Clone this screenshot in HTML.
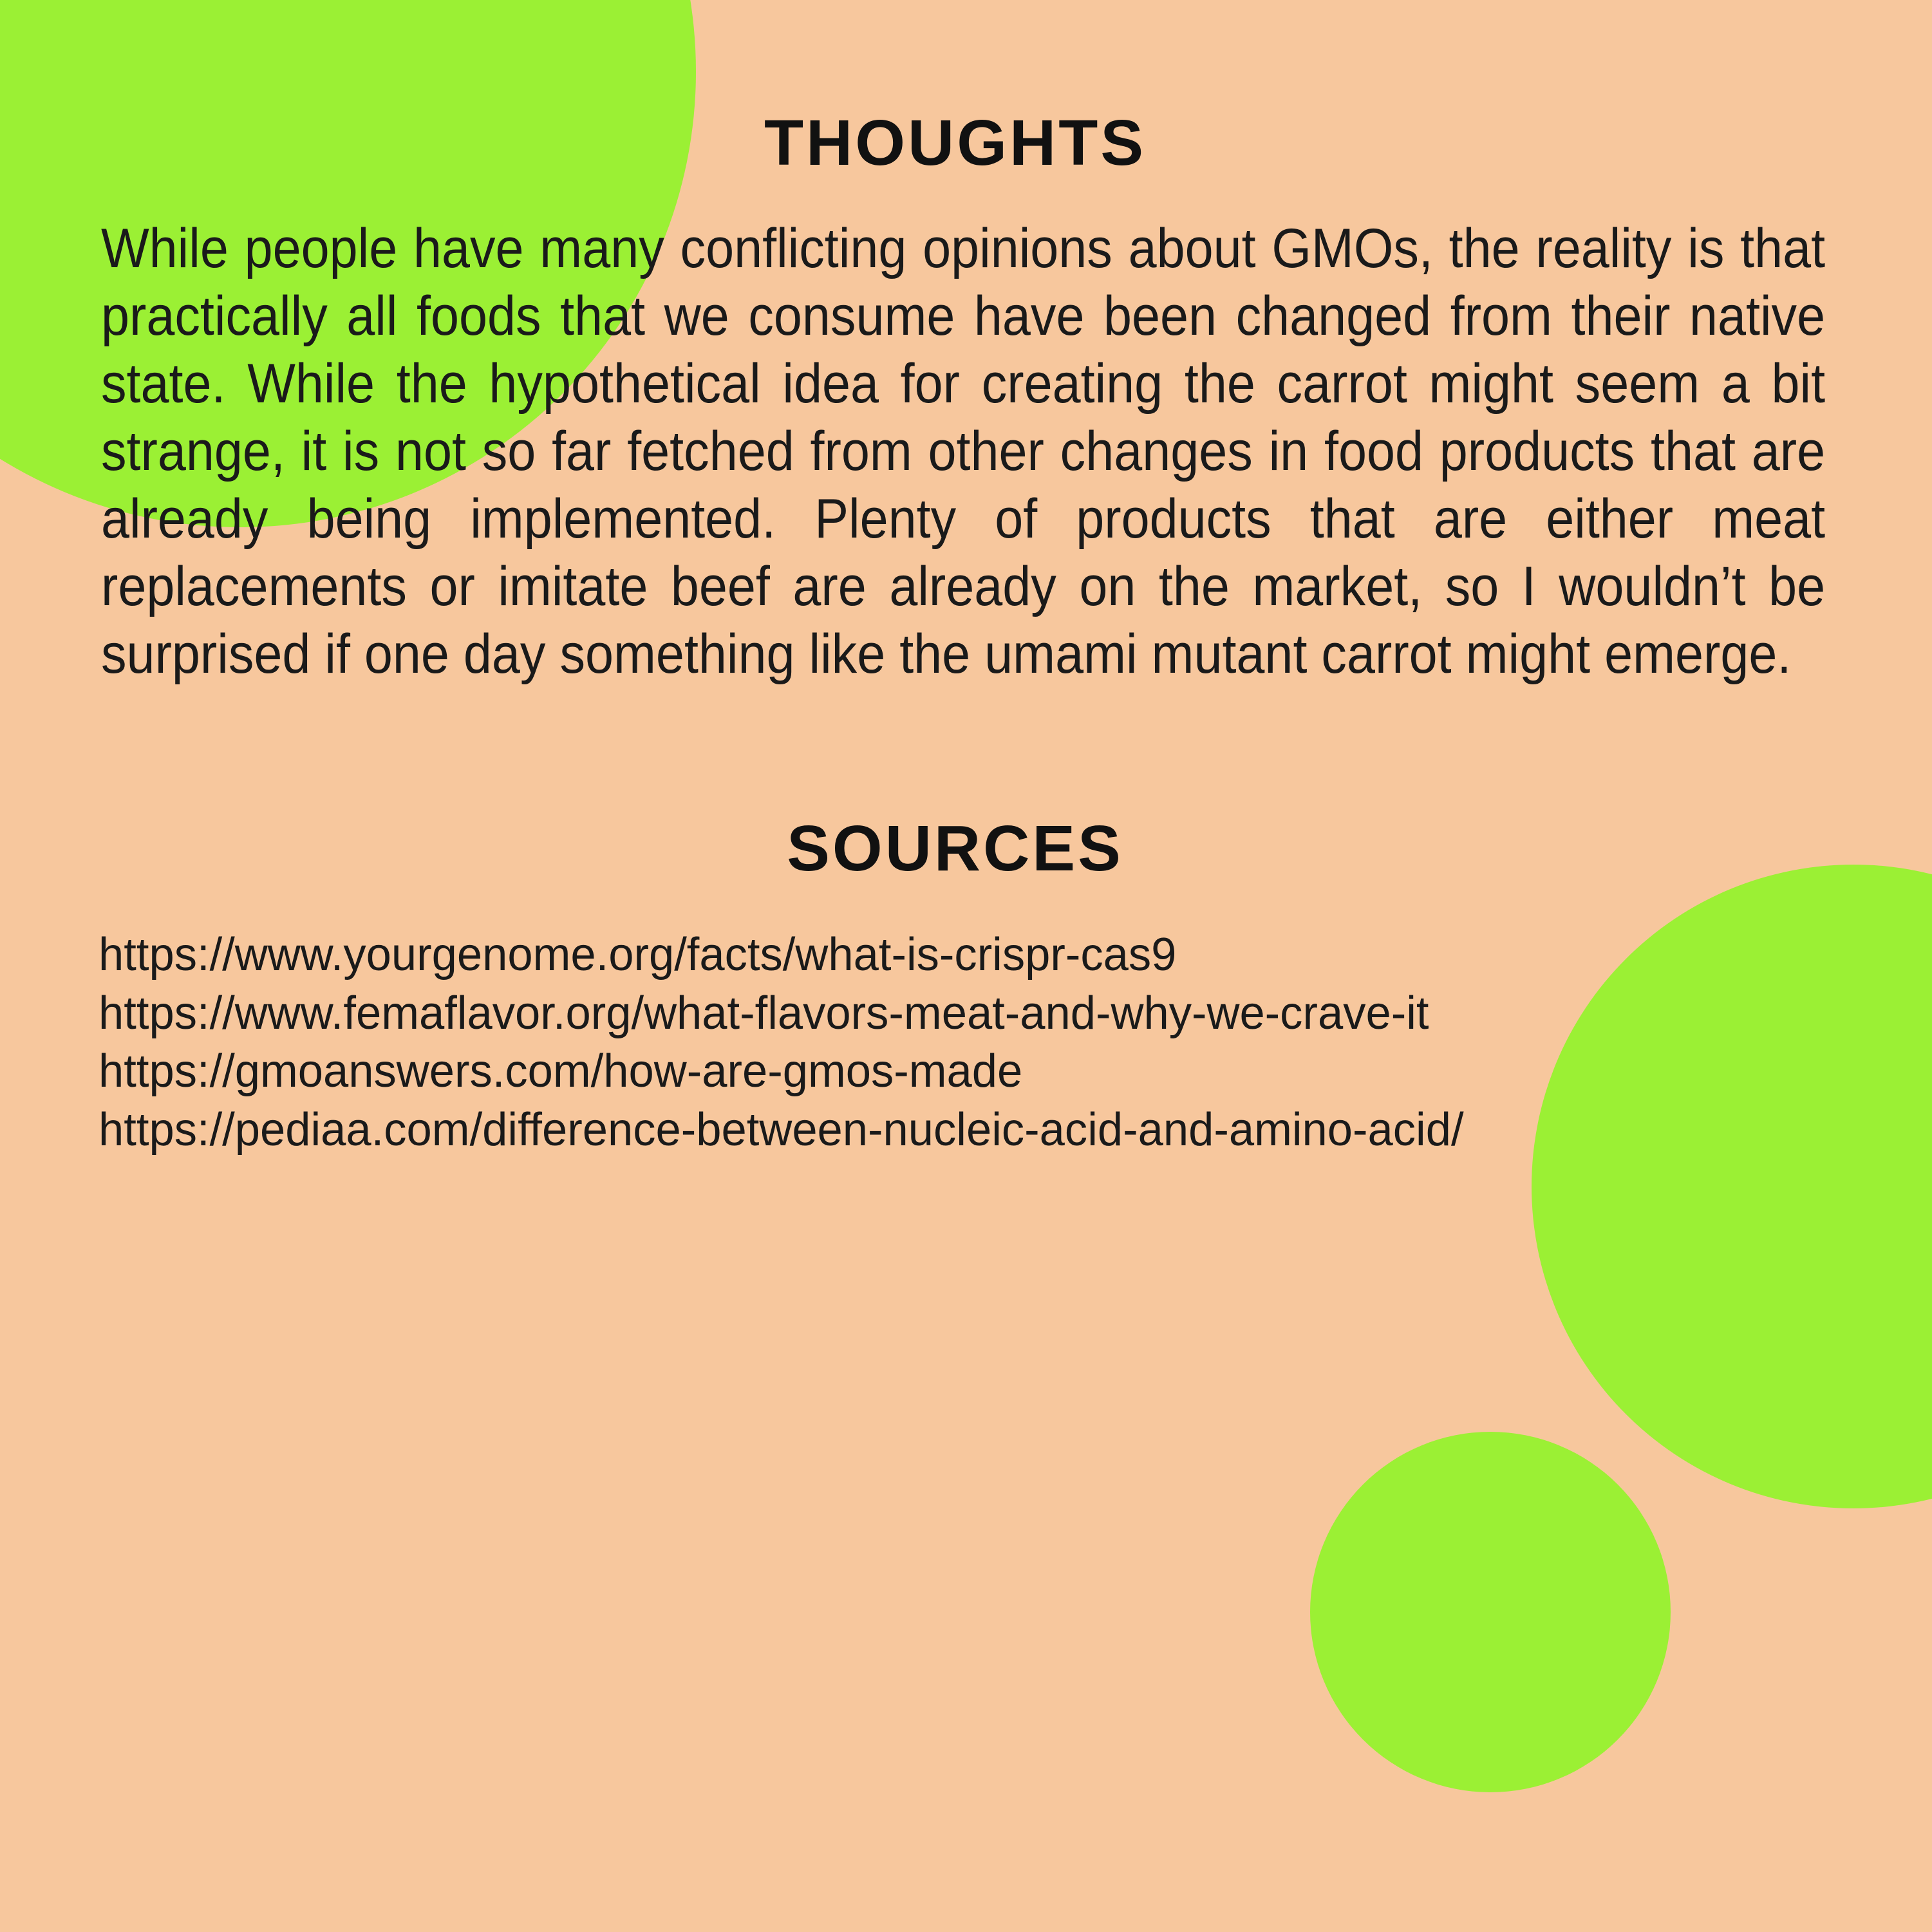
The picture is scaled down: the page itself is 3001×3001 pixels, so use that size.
<!DOCTYPE html>
<html><head><meta charset="utf-8"><style>
html,body{margin:0;padding:0}
body{width:3001px;height:3001px;background:#F7C79D;position:relative;overflow:hidden;font-family:"Liberation Sans",sans-serif;color:#111}
.c{position:absolute;border-radius:50%;background:#9BF034}
h2{position:absolute;left:-17px;width:3001px;text-align:center;margin:0;font-weight:bold;font-size:100px;letter-spacing:4px;line-height:1}
.p{position:absolute;left:157px;top:334px;width:2911px;transform:scaleX(0.92);transform-origin:0 0;font-size:86px;line-height:105px;color:#1a1a1a}
.p div{text-align:justify;text-align-last:justify;white-space:nowrap}
.p div.l{text-align-last:left}
.s{position:absolute;left:153px;top:1438px;font-size:72px;line-height:90.5px;transform:scaleX(0.98);transform-origin:0 0;color:#1a1a1a}
</style></head><body>
<div class="c" style="left:-335px;top:-597px;width:1416px;height:1416px"></div>
<div class="c" style="left:2379px;top:1343px;width:1000px;height:1000px"></div>
<div class="c" style="left:2035px;top:2224px;width:560px;height:560px"></div>
<h2 style="top:172px">THOUGHTS</h2>
<div class="p">
<div>While people have many conflicting opinions about GMOs, the reality is that</div>
<div>practically all foods that we consume have been changed from their native</div>
<div>state. While the hypothetical idea for creating the carrot might seem a bit</div>
<div>strange, it is not so far fetched from other changes in food products that are</div>
<div>already being implemented. Plenty of products that are either meat</div>
<div>replacements or imitate beef are already on the market, so I wouldn’t be</div>
<div class="l">surprised if one day something like the umami mutant carrot might emerge.</div>
</div>
<h2 style="top:1268px">SOURCES</h2>
<div class="s">
<div>https://www.yourgenome.org/facts/what-is-crispr-cas9</div>
<div>https://www.femaflavor.org/what-flavors-meat-and-why-we-crave-it</div>
<div>https://gmoanswers.com/how-are-gmos-made</div>
<div>https://pediaa.com/difference-between-nucleic-acid-and-amino-acid/</div>
</div>
</body></html>
